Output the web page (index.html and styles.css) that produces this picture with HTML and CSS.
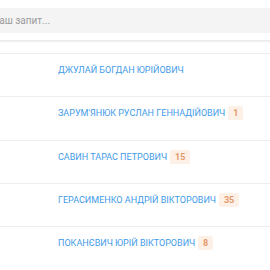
FILE: index.html
```html
<!DOCTYPE html>
<html lang="uk">

<head>
    <meta charset="utf-8">
    <title>Пошук</title>
    <link rel="stylesheet" href="styles.css">
</head>

<body>
    <main class="page">
        <header class="search-bar">
            <input class="search-input" type="text" placeholder="Ваш запит...">
        </header>

        <ul class="people">
            <li class="person">
                <a class="person-name" href="#">Джулай Богдан Юрійович</a>
            </li>
            <li class="person">
                <a class="person-name" href="#">Зарум'янюк Руслан Геннадійович</a>
                <span class="badge">1</span>
            </li>
            <li class="person">
                <a class="person-name" href="#">Савин Тарас Петрович</a>
                <span class="badge">15</span>
            </li>
            <li class="person">
                <a class="person-name" href="#">Герасименко Андрій Вікторович</a>
                <span class="badge">35</span>
            </li>
            <li class="person">
                <a class="person-name" href="#">Поканєвич Юрій Вікторович</a>
                <span class="badge">8</span>
            </li>
        </ul>
    </main>
</body>

</html>
```

FILE: styles.css
```css
body {
    margin: 0;
    padding: 0;
    background-color: #fff;
    font-family: Roboto, "Noto Sans", sans-serif;
    overflow: hidden;
}

.page {
    margin-left: -12px;
}

.search-bar {
    padding: 8px 0 7px;
    box-shadow: 0 1px 1px rgba(0, 0, 0, 0.06);
    border-bottom: 1px solid #ececec;
}

.search-input {
    display: block;
    width: 100%;
    height: 25px;
    box-sizing: border-box;
    border: 0;
    outline: none;
    padding: 0 5px;
    background-color: #f4f4f4;
    font-family: Roboto, "Noto Sans", sans-serif;
    font-size: 10px;
    color: #555;
}

.search-input::placeholder {
    color: #9a9a9a;
}

.people {
    list-style: none;
    margin: 12px 0 0;
    padding: 0;
}

.person {
    display: flex;
    align-items: flex-start;
    gap: 3px;
    height: 43.33px;
    box-sizing: border-box;
    padding: 10px 0 0 70px;
    border-top: 1px solid #eeeeee;
}

.person-name {
    color: #3f9be8;
    font-size: 9px;
    line-height: 12px;
    text-transform: uppercase;
    text-decoration: none;
}

.badge {
    margin-top: -1px;
    padding: 0 5px;
    height: 14px;
    line-height: 14px;
    border-radius: 2px;
    background-color: #fdf0e6;
    color: #e59a6c;
    font-size: 9px;
    font-weight: 700;
}
```
